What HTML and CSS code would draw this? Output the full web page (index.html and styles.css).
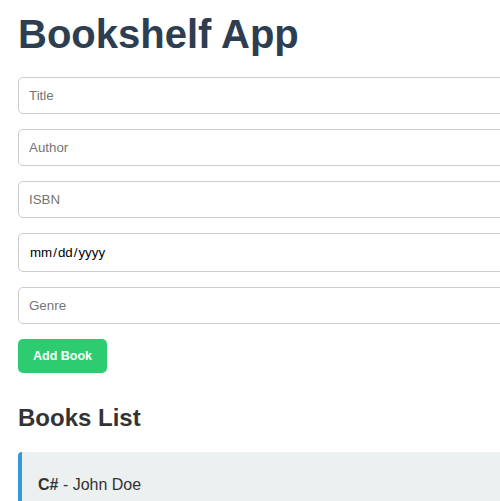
FILE: index.html
```html
<!DOCTYPE html>
<html lang="en">
<head>
<meta charset="utf-8">
<title>Bookshelf App</title>
<link rel="stylesheet" href="styles.css">
</head>
<body>
<div class="app">
  <h1 class="title">Bookshelf App</h1>
  <form class="book-form">
    <input class="field" type="text" placeholder="Title">
    <input class="field" type="text" placeholder="Author">
    <input class="field" type="text" placeholder="ISBN">
    <input class="field" type="date">
    <input class="field" type="text" placeholder="Genre">
    <button class="add-btn" type="button">Add Book</button>
  </form>
  <h2 class="list-title">Books List</h2>
  <ul class="book-list">
    <li class="book-item"><strong>C#</strong> - John Doe</li>
  </ul>
</div>
</body>
</html>
```
FILE: styles.css
```css
html, body {
  margin: 0;
  padding: 0;
  overflow: hidden;
}
body {
  font-family: "Liberation Sans", Arial, sans-serif;
  color: #333;
  background: #fff;
}
.app {
  width: 760px;
  padding: 12px 18px 10px;
}
.title {
  margin: 0 0 20px;
  font-size: 40px;
  font-weight: bold;
  color: #2c3e50;
}
.book-form {
  display: flex;
  flex-direction: column;
  align-items: flex-start;
  gap: 15px;
}
.field {
  box-sizing: border-box;
  width: 100%;
  padding: 10px;
  border: 1px solid #ccc;
  border-radius: 5px;
  font-family: "Liberation Sans", Arial, sans-serif;
  font-size: 13.33px;
  color: #000;
  background: #fff;
}
.field::placeholder {
  color: #757575;
}
.add-btn {
  padding: 10px 15px;
  border: none;
  border-radius: 5px;
  background: #2ecc71;
  color: #fff;
  font-family: "Liberation Sans", Arial, sans-serif;
  font-size: 12.5px;
  font-weight: bold;
}
.list-title {
  margin: 31px 0 20px;
  font-size: 24px;
  font-weight: bold;
  color: #333;
}
.book-list {
  list-style: none;
  margin: 0;
  padding: 0;
}
.book-item {
  padding: 24px 16px;
  background: #ecf0f1;
  border-left: 4px solid #3498db;
  border-radius: 4px;
  font-size: 16px;
  color: #333;
}
```
